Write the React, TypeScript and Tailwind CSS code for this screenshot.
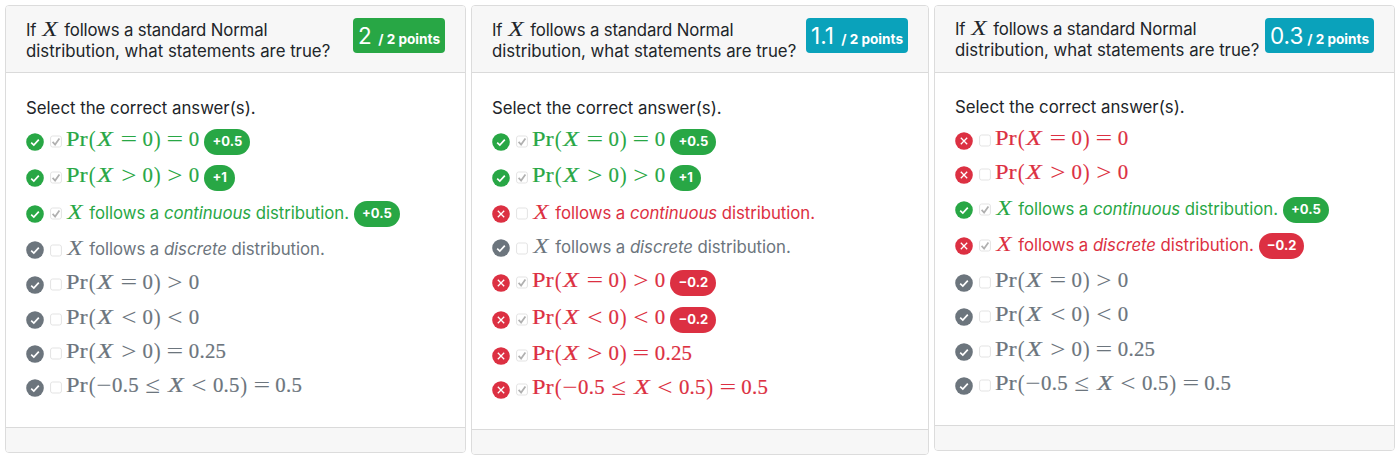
import type { ReactNode } from "react";
import clsx from "clsx";

type Tone = "good" | "bad" | "muted";

interface Answer {
  tone: Tone;
  checked?: boolean;
  body: ReactNode;
  badge?: string;
  height: string;
}

interface CardData {
  frame: string;
  header: string;
  body: string;
  score: string;
  scoreStyle: string;
  answers: Answer[];
}

const textTone: Record<Tone, string> = {
  good: "text-[#28a745]",
  bad: "text-[#dc3042]",
  muted: "text-[#6c757d]",
};

const badgeTone: Record<Tone, string> = {
  good: "bg-[#28a745]",
  bad: "bg-[#dc3042]",
  muted: "bg-[#6c757d]",
};

function VarX() {
  return (
    <span className="inline-block w-[18.7px] whitespace-nowrap font-['Liberation_Serif',serif] text-[21px] leading-none tracking-normal">
      <span className="inline-block origin-left scale-x-[1.2] pl-[1px] italic">X</span>
    </span>
  );
}

function Rel({ children }: { children: string }) {
  return (
    <span className="mx-[5.85px] inline-block w-4 text-center leading-none tracking-normal">
      <span
        className={clsx(
          "-mx-1 inline-block [-webkit-text-stroke:0px]",
          children === "=" ? "scale-x-[1.42]" : "scale-x-[1.3] scale-y-[1.15]",
        )}
      >
        {children}
      </span>
    </span>
  );
}

function Paren({ children }: { children: string }) {
  return (
    <span className="inline-block w-2 text-center leading-none tracking-normal">
      <span className="inline-block scale-y-[1.1] [-webkit-text-stroke:0px]">{children}</span>
    </span>
  );
}

function MathText({ children }: { children: ReactNode }) {
  return (
    <span className="whitespace-nowrap pb-px font-['Liberation_Serif',serif] text-[20.8px] leading-none tracking-[0.25px] [-webkit-text-stroke:0.2px_currentColor]">
      {children}
    </span>
  );
}

function Pr({ first, second, value }: { first: string; second: string; value: string }) {
  return (
    <MathText>
      <PrHead />
      <VarX />
      <Rel>{first}</Rel>0<Paren>)</Paren>
      <Rel>{second}</Rel>
      {value}
    </MathText>
  );
}

function PrHead() {
  return (
    <>
      <span className="inline-block w-[22.1px] leading-none tracking-normal">
        <span className="inline-block origin-left scale-x-[1.17]">Pr</span>
      </span>
      <Paren>(</Paren>
    </>
  );
}

function PrRange() {
  return (
    <MathText>
      <PrHead />
      <span className="inline-block w-4 text-center leading-none">
        <span className="inline-block scale-x-[1.3] [-webkit-text-stroke:0px]">−</span>
      </span>
      0.5<Rel>≤</Rel>
      <VarX />
      <Rel>&lt;</Rel>0.5<Paren>)</Paren>
      <Rel>=</Rel>0.5
    </MathText>
  );
}

function Follows({ kind }: { kind: string }) {
  return (
    <span className="whitespace-nowrap tracking-[-0.06px]">
      <VarX /> follows a <em>{kind}</em> distribution.
    </span>
  );
}

function StatusIcon({ tone }: { tone: Tone }) {
  return (
    <svg viewBox="0 0 18 18" className={clsx("size-[18px] shrink-0", textTone[tone])}>
      <circle cx="9" cy="9" r="8.8" fill="currentColor" />
      <path
        d={tone === "bad" ? "M5.8 5.8 12.2 12.2M12.2 5.8 5.8 12.2" : "M5.2 9.6 7.8 12 12.8 6.6"}
        fill="none"
        stroke="#fff"
        strokeWidth={tone === "bad" ? 1.3 : 1.7}
      />
    </svg>
  );
}

function CheckBox({ checked }: { checked?: boolean }) {
  return (
    <svg viewBox="0 0 12 13" className="ml-1.5 h-[13px] w-3 shrink-0">
      <rect x="0.6" y="1" width="10.8" height="11" rx="2" fill="#fff" stroke="#e3e3e3" />
      {checked && <path d="M2.6 6.9 5.1 9.6 9.4 3.4" fill="none" stroke="#b0b0b0" strokeWidth="1.7" />}
    </svg>
  );
}

const eq0: ReactNode = <Pr first="=" second="=" value="0" />;
const gt0: ReactNode = <Pr first=">" second=">" value="0" />;
const eqGt: ReactNode = <Pr first="=" second=">" value="0" />;
const lt0: ReactNode = <Pr first="<" second="<" value="0" />;
const quarter: ReactNode = <Pr first=">" second="=" value="0.25" />;

const cards: CardData[] = [
  {
    frame: "ml-[5px] h-[448px] w-[461px]",
    header: "pt-[13px]",
    body: "pt-[25px]",
    score: "2",
    scoreStyle: "w-[92px] bg-[#28a745]",
    answers: [
      { tone: "good", checked: true, body: eq0, badge: "+0.5", height: "h-[36px]" },
      { tone: "good", checked: true, body: gt0, badge: "+1", height: "h-[36px]" },
      { tone: "good", checked: true, body: <Follows kind="continuous" />, badge: "+0.5", height: "h-[36.5px]" },
      { tone: "muted", body: <Follows kind="discrete" />, height: "h-[34.5px]" },
      { tone: "muted", body: eqGt, height: "h-[35px]" },
      { tone: "muted", body: lt0, height: "h-[34px]" },
      { tone: "muted", body: quarter, height: "h-[34px]" },
      { tone: "muted", body: <PrRange />, height: "h-[34px]" },
    ],
  },
  {
    frame: "ml-[5px] h-[450px] w-[458px]",
    header: "pt-[13px]",
    body: "pt-[25px]",
    score: "1.1",
    scoreStyle: "w-[102px] bg-[#0aa2bb]",
    answers: [
      { tone: "good", checked: true, body: eq0, badge: "+0.5", height: "h-[36px]" },
      { tone: "good", checked: true, body: gt0, badge: "+1", height: "h-[36px]" },
      { tone: "bad", body: <Follows kind="continuous" />, height: "h-[34.5px]" },
      { tone: "muted", body: <Follows kind="discrete" />, height: "h-[34.5px]" },
      { tone: "bad", checked: true, body: eqGt, badge: "−0.2", height: "h-[37px]" },
      { tone: "bad", checked: true, body: lt0, badge: "−0.2", height: "h-[36px]" },
      { tone: "bad", checked: true, body: quarter, height: "h-[34px]" },
      { tone: "bad", checked: true, body: <PrRange />, height: "h-[34px]" },
    ],
  },
  {
    frame: "ml-[5px] h-[446px] w-[461px]",
    header: "pt-[12px]",
    body: "pt-[24px]",
    score: "0.3",
    scoreStyle: "w-[109px] bg-[#0aa2bb]",
    answers: [
      { tone: "bad", body: eq0, height: "h-[34px]" },
      { tone: "bad", body: gt0, height: "h-[35px]" },
      { tone: "good", checked: true, body: <Follows kind="continuous" />, badge: "+0.5", height: "h-[36px]" },
      { tone: "bad", checked: true, body: <Follows kind="discrete" />, badge: "−0.2", height: "h-[37px]" },
      { tone: "muted", body: eqGt, height: "h-[34px]" },
      { tone: "muted", body: lt0, height: "h-[35px]" },
      { tone: "muted", body: quarter, height: "h-[34px]" },
      { tone: "muted", body: <PrRange />, height: "h-[34px]" },
    ],
  },
];

function AnswerRow({ answer }: { answer: Answer }) {
  return (
    <li className={answer.height}>
      <div className={clsx("flex h-[26px] items-center", textTone[answer.tone])}>
        <StatusIcon tone={answer.tone} />
        <CheckBox checked={answer.checked} />
        <span className="ml-1 flex h-[26px] items-center pb-[3px] leading-5">{answer.body}</span>
        {answer.badge && (
          <span
            className={clsx(
              "ml-[5px] flex h-[26px] items-center rounded-full px-2 text-[13px] font-bold text-white",
              badgeTone[answer.tone],
            )}
          >
            {answer.badge}
          </span>
        )}
      </div>
    </li>
  );
}

function QuestionCard({ card }: { card: CardData }) {
  return (
    <section
      className={clsx(
        "mt-[5px] flex shrink-0 flex-col overflow-hidden rounded-[4px] border border-[#dcdcdc] bg-white",
        card.frame,
      )}
    >
      <header className="flex h-[67px] shrink-0 justify-between border-b border-[#dadada] bg-[#f7f7f7] pr-5 pl-5">
        <h2 className={clsx("whitespace-nowrap leading-[20.5px]", card.header)}>
          <span className="tracking-[-0.16px]">
            If <VarX /> follows a standard Normal
          </span>
          <br />
          distribution, what statements are true?
        </h2>
        <div
          className={clsx(
            "mt-3 -ml-2 flex h-[35px] shrink-0 items-baseline justify-between rounded-[4px] px-[5px] leading-[36px] text-white",
            card.scoreStyle,
          )}
        >
          <span className="text-[22.5px]">{card.score}</span>
          <span className="text-[13.6px] font-bold">/ 2 points</span>
        </div>
      </header>
      <div className={clsx("flex-1 px-5", card.body)}>
        <p className="h-[30.5px] leading-5">Select the correct answer(s).</p>
        <ul>
          {card.answers.map((answer, i) => (
            <AnswerRow key={i} answer={answer} />
          ))}
        </ul>
      </div>
      <footer className="h-[25px] shrink-0 border-t border-[#dadada] bg-[#f7f7f7]" />
    </section>
  );
}

export default function App() {
  return (
    <main className="flex h-[460px] w-[1400px] items-start overflow-hidden bg-white font-['Inter',sans-serif] text-[16.8px] text-[#212529]">
      {cards.map((card) => (
        <QuestionCard key={card.score} card={card} />
      ))}
    </main>
  );
}
